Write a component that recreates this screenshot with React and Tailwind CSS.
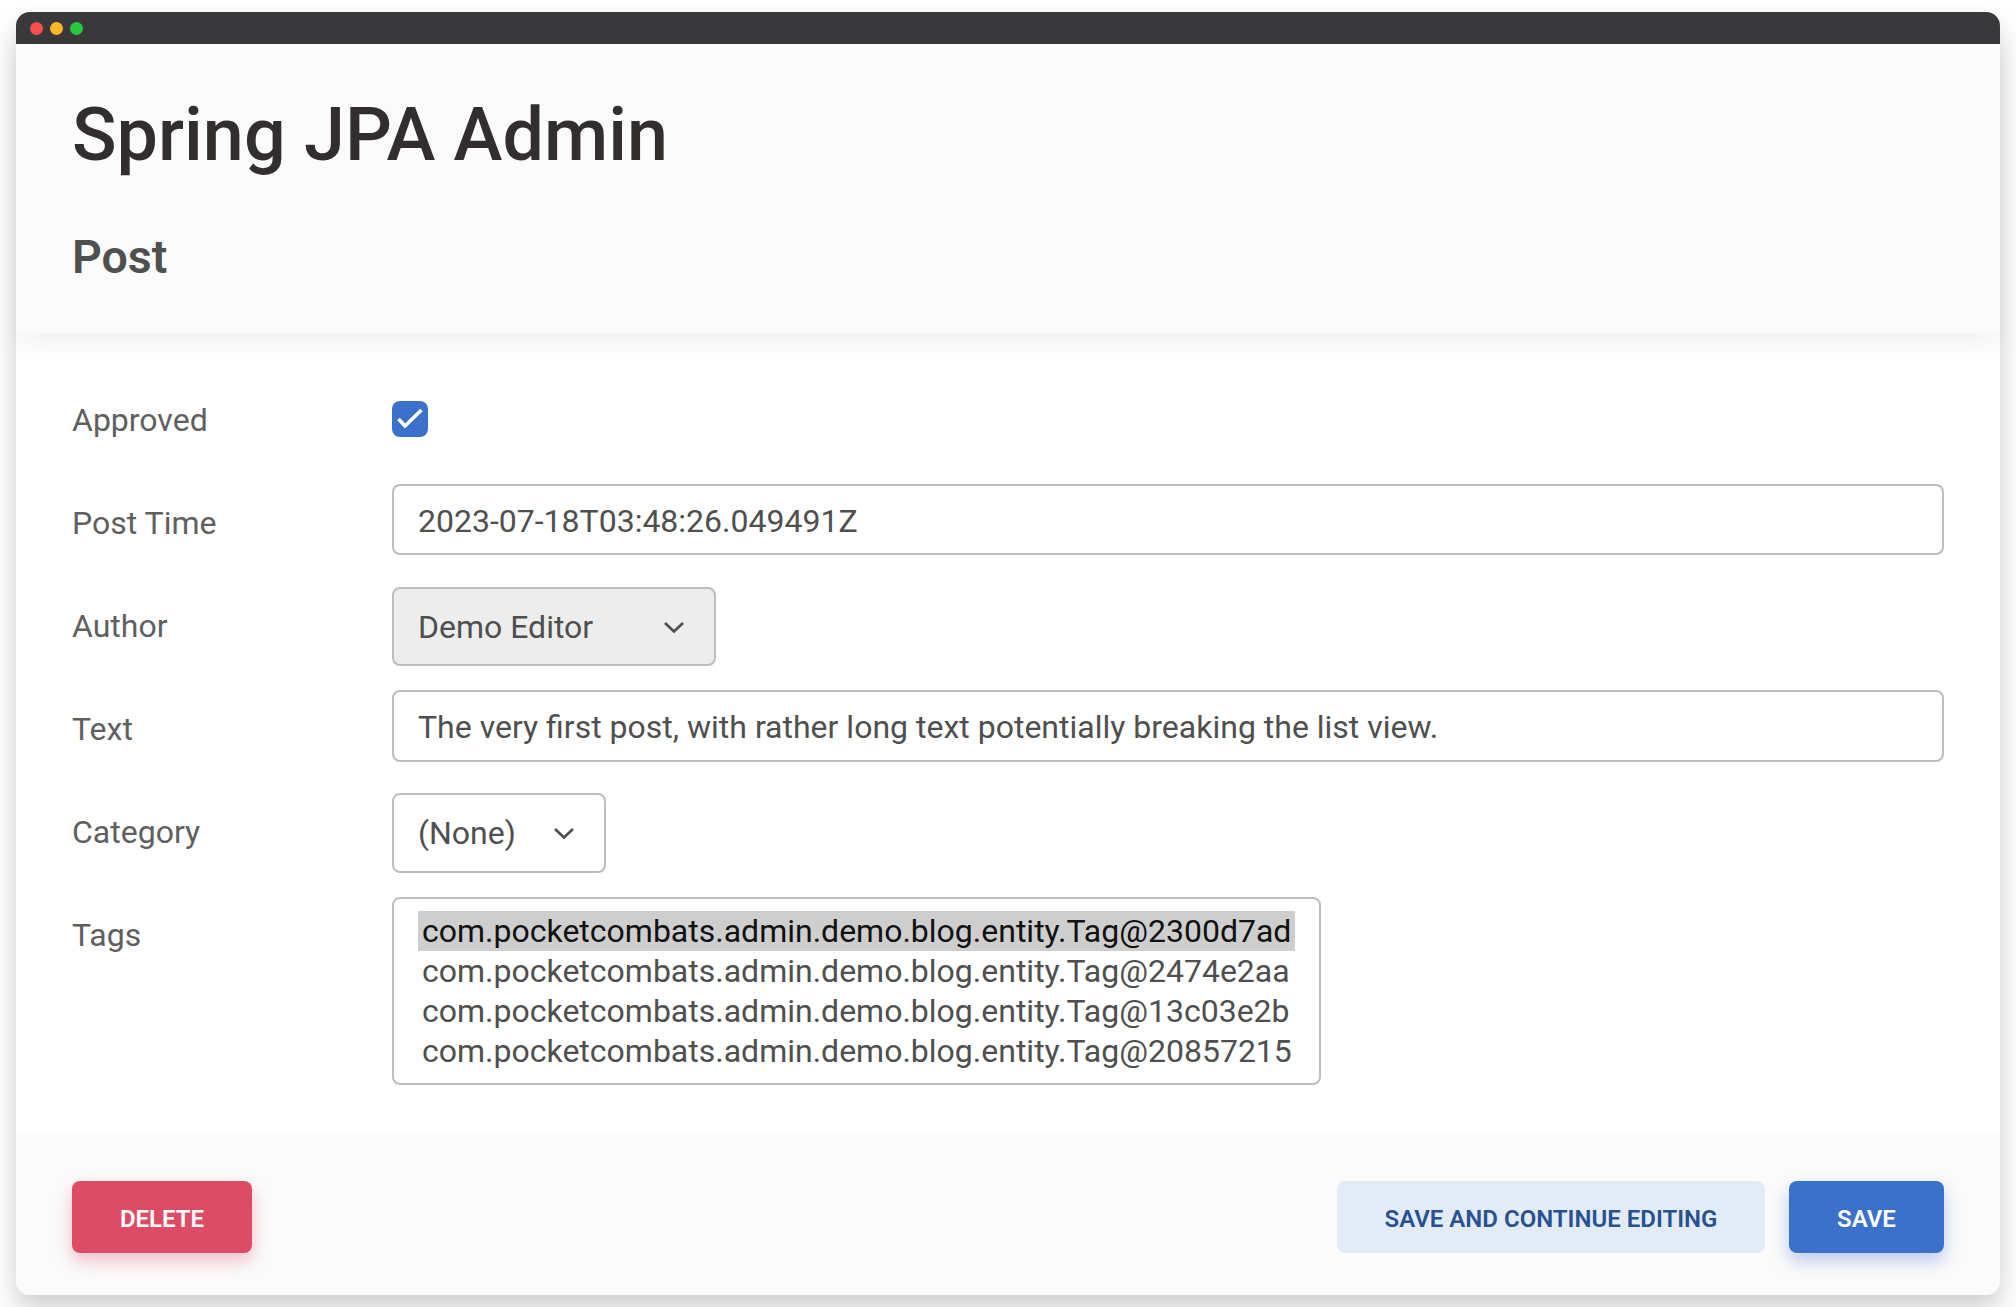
import React from 'react';

const tags = [
  'com.pocketcombats.admin.demo.blog.entity.Tag@2300d7ad',
  'com.pocketcombats.admin.demo.blog.entity.Tag@2474e2aa',
  'com.pocketcombats.admin.demo.blog.entity.Tag@13c03e2b',
  'com.pocketcombats.admin.demo.blog.entity.Tag@20857215',
];

function Chevron() {
  return (
    <svg width="22" height="12" viewBox="0 0 22 12" fill="none" className="shrink-0">
      <path d="M2 2l9 8.5L20 2" stroke="#4f4f4f" strokeWidth="2.6" />
    </svg>
  );
}

function Row({ label, children }) {
  return (
    <div className="grid grid-cols-[320px_1fr] min-h-[103px] items-start">
      <div className="pt-[17px] text-[32px] leading-[44px] text-[#5f5f5f]">{label}</div>
      <div>{children}</div>
    </div>
  );
}

function TextField({ value, className }) {
  return (
    <div className={`flex items-center w-full rounded-lg border-2 border-[#bdbdbd] bg-white px-6 text-[32px] text-[#4f4f4f] ${className}`}>
      {value}
    </div>
  );
}

function SelectField({ value, className }) {
  return (
    <div className={`flex items-center justify-between rounded-lg border-2 border-[#bdbdbd] pl-6 pr-[29px] text-[32px] text-[#4f4f4f] ${className}`}>
      <span>{value}</span>
      <Chevron />
    </div>
  );
}

export default function App() {
  return (
    <div className="min-h-[1307px] overflow-hidden bg-white px-4 pt-3 font-['Roboto',sans-serif]">
      <div className="flex h-[1283px] flex-col rounded-[14px] bg-white shadow-[0_14px_28px_rgba(0,0,0,0.2)]">
        <div className="flex h-8 items-center gap-[7px] rounded-t-[14px] bg-[#39393b] pl-[14px]">
          <span className="size-[13px] rounded-full bg-[#fb4f4f]" />
          <span className="size-[13px] rounded-full bg-[#fdb726]" />
          <span className="size-[13px] rounded-full bg-[#27c93f]" />
        </div>

        <header className="relative h-[289px] bg-[#fbfbfb] px-14 pt-[49px] shadow-[0_12px_24px_rgba(0,0,0,0.05)]">
          <h1 className="text-[73.7px] leading-[85px] font-medium text-[#332e2e]">Spring JPA Admin</h1>
          <h2 className="mt-[52px] text-[46.5px] leading-[54px] font-semibold text-[#4f4f4f]">Post</h2>
        </header>

        <form className="flex-1 px-14 pt-[48px]">
          <Row label="Approved">
            <div className="mt-[20px] size-9 rounded-lg bg-[#3b71ca]">
              <svg width="36" height="36" viewBox="0 0 36 36" fill="none">
                <path d="M6.5 18l6.5 7L29.5 9" stroke="#fff" strokeWidth="3.6" />
              </svg>
            </div>
          </Row>
          <Row label="Post Time">
            <TextField value="2023-07-18T03:48:26.049491Z" className="h-[71px] pt-[2px]" />
          </Row>
          <Row label="Author">
            <SelectField value="Demo Editor" className="h-[79px] w-[324px] bg-[#ededed]" />
          </Row>
          <Row label="Text">
            <TextField value="The very first post, with rather long text potentially breaking the list view." className="h-[72px] pt-[1px]" />
          </Row>
          <Row label="Category">
            <SelectField value="(None)" className="h-[80px] w-[214px] bg-white" />
          </Row>
          <Row label="Tags">
            <div className="mt-px w-[929px] rounded-lg border-2 border-[#bdbdbd] bg-white px-6 py-3 text-[32px] leading-10 text-[#4f4f4f]">
              {tags.map((tag, i) => (
                <div key={tag} className={i === 0 ? 'bg-[#cecece] px-1 text-[#111]' : 'px-1'}>
                  {tag}
                </div>
              ))}
            </div>
          </Row>
        </form>

        <footer className="flex h-[162px] items-start justify-between rounded-b-[14px] bg-[#fbfbfb] px-14 pt-12">
          <button type="button" className="h-[72px] w-[180px] rounded-lg bg-[#dc4c64] pt-[3px] text-2xl font-semibold text-white shadow-[0_8px_18px_rgba(220,76,100,0.35)]">
            DELETE
          </button>
          <div className="flex gap-6">
            <button type="button" className="h-[72px] w-[428px] rounded-lg bg-[#e3ebf7] pt-[3px] text-2xl font-semibold text-[#285192]">
              SAVE AND CONTINUE EDITING
            </button>
            <button type="button" className="h-[72px] w-[155px] rounded-lg bg-[#3b71ca] pt-[3px] text-2xl font-semibold text-white shadow-[0_8px_18px_rgba(59,113,202,0.35)]">
              SAVE
            </button>
          </div>
        </footer>
      </div>
    </div>
  );
}
